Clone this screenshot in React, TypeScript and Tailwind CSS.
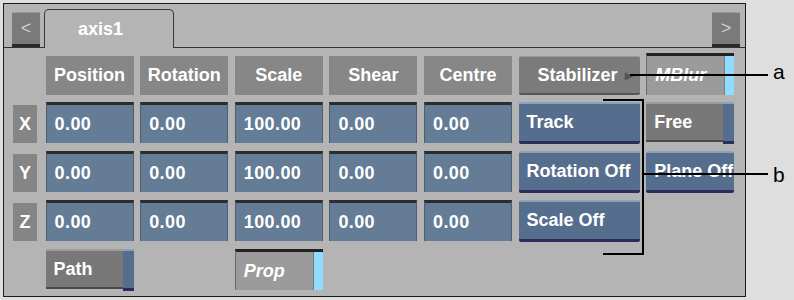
import React from 'react';

const cols = ['Position', 'Rotation', 'Scale', 'Shear', 'Centre'];
const rows = [
  { axis: 'X', values: ['0.00', '0.00', '100.00', '0.00', '0.00'], btn: 'Track' },
  { axis: 'Y', values: ['0.00', '0.00', '100.00', '0.00', '0.00'], btn: 'Rotation Off' },
  { axis: 'Z', values: ['0.00', '0.00', '100.00', '0.00', '0.00'], btn: 'Scale Off' },
];

function Field({ value }: { value: string }) {
  return (
    <div className="self-start h-[41px] bg-[#647c96] border-t-[3px] border-t-[#2c2c2c] border-x border-x-[#4e5e70] flex items-center pl-[8px] text-white font-bold text-[18px] tracking-[0.4px]">
      {value}
    </div>
  );
}

function BlueButton({ label }: { label: string }) {
  return (
    <div className="h-[42px] bg-[#566e8e] border-t-2 border-t-[#8ba1bb] border-b-[3px] border-b-[#2b2d5c] rounded-[2px] flex items-center pl-[8px] text-white font-bold text-[18px] whitespace-nowrap">
      {label}
    </div>
  );
}

function SplitButton({ label }: { label: string }) {
  return (
    <div className="h-[42px] flex">
      <div className="flex-1 h-[40px] bg-[#787878] border-t-2 border-t-[#9c9c9c] border-b-2 border-b-[#4a4a4a] flex items-center pl-[8px] text-white font-bold text-[18px]">
        {label}
      </div>
      <div className="w-[11px] bg-[#566e8e] border-t-2 border-t-[#8ba1bb] border-b-[3px] border-b-[#2b2d5c]" />
    </div>
  );
}

function Toggle({ label, extra }: { label: string; extra?: string }) {
  return (
    <div className={`flex bg-[#9b9b9b] border-t-[3px] border-t-[#222] border-l border-l-[#6a6a6a] ${extra ?? ''}`}>
      <div className="flex-1 flex items-center pl-[8px] text-white font-bold italic text-[18px]">{label}</div>
      <div className="w-[10px] bg-[#8edcff] border-l border-l-[#7a7a7a]" />
    </div>
  );
}

export default function App() {
  return (
    <div className="relative w-[794px] h-[300px] bg-[#dedede] pt-[3px] pl-[3px] font-['Liberation_Sans',Arial,sans-serif]">
      <div className="w-[743px] h-[294px] border border-[#1a1a1a] bg-[#b4b4b4]">
        {/* tab bar */}
        <div className="h-[44px] flex items-end pl-[8px] pr-[5px] border-b border-b-[#333]">
          <div className="w-[28px] h-[35px] bg-[#7a7a7a] border-t border-t-[#9a9a9a] border-b-[3px] border-b-[#2a2a2a] flex items-center justify-center text-[#cfcfcf] text-[18px]">
            &lt;
          </div>
          <div className="ml-[4px] -mb-px w-[130px] h-[39px] bg-[#b4b4b4] border border-b-0 border-[#3a3a3a] rounded-t-[5px] flex items-center pl-[33px] text-white font-bold text-[18px]">
            axis1
          </div>
          <div className="flex-1" />
          <div className="w-[28px] h-[35px] bg-[#7a7a7a] border-t border-t-[#9a9a9a] border-b-[3px] border-b-[#2a2a2a] flex items-center justify-center text-[#cfcfcf] text-[18px]">
            &gt;
          </div>
        </div>

        {/* grid */}
        <div className="mt-[8px] pl-[9px] grid grid-cols-[26px_88px_88px_88px_88px_88px_121px_88px] grid-rows-[39px_42px_42px_42px_43px] gap-x-[6.6px] gap-y-[7px]">
          <div />
          {cols.map((c) => (
            <div key={c} className="bg-[#878787] flex items-center justify-center text-white font-bold text-[18px]">
              {c}
            </div>
          ))}
          <div className="bg-[#7b7b7b] border-t border-t-[#9a9a9a] border-b-2 border-b-[#555] rounded-[2px] flex items-center text-white font-bold text-[18px] pl-[19px]">
            Stabilizer
            <span className="ml-[7px] text-[#555] text-[10px]">&#9654;</span>
          </div>
          <Toggle label="MBlur" extra="-mt-[3px] h-[42px]" />

          {rows.map((r) => (
            <React.Fragment key={r.axis}>
              <div className="mt-[3px] w-[24px] h-[38px] bg-[#858585] flex items-center justify-center text-white font-bold text-[18px]">
                {r.axis}
              </div>
              {r.values.map((v, i) => (
                <Field key={i} value={v} />
              ))}
              <BlueButton label={r.btn} />
              {r.axis === 'X' ? <SplitButton label="Free" /> : r.axis === 'Y' ? <BlueButton label="Plane Off" /> : <div />}
            </React.Fragment>
          ))}

          <div />
          <SplitButton label="Path" />
          <div />
          <Toggle label="Prop" extra="h-[41px]" />
        </div>
      </div>

      {/* callouts */}
      <div className="absolute left-[630px] top-[74px] w-[138px] h-[2px] bg-black" />
      <div className="absolute left-[773px] top-[61px] text-[21px] text-black leading-none">a</div>
      <div className="absolute left-[603px] top-[99px] w-[41px] h-[156px] border-t-2 border-r-2 border-b-2 border-black" />
      <div className="absolute left-[642px] top-[173px] w-[126px] h-[2px] bg-black" />
      <div className="absolute left-[773px] top-[164px] text-[21px] text-black leading-none">b</div>
    </div>
  );
}
